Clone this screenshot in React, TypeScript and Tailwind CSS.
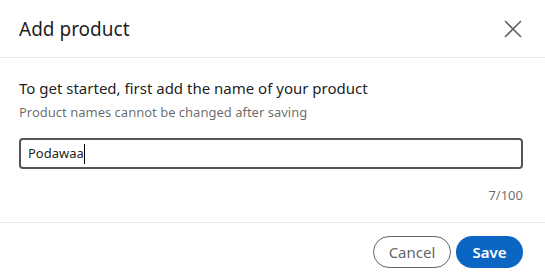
import React from "react";

export default function App() {
  return (
    <div className="w-[545px] h-[279px] bg-white flex flex-col" style={{ fontFamily: '"Noto Sans", "Open Sans", sans-serif' }}>
      <div className="h-[58px] flex items-center justify-between pl-[19px] pr-[20px] border-b border-[#e8e8e8] shrink-0">
        <h2 className="text-[19px] text-[#000000e6] leading-[28px]">Add product</h2>
        <button className="w-[24px] h-[24px] flex items-center justify-center text-[#666666]">
          <svg width="18" height="18" viewBox="0 0 18 18" fill="none" stroke="currentColor" strokeWidth="1.6">
            <path d="M1 1 L17 17 M17 1 L1 17" />
          </svg>
        </button>
      </div>
      <div className="px-[19px] pt-[18px] flex flex-col">
        <p className="text-[15px] leading-[24px] text-[#000000e6]">To get started, first add the name of your product</p>
        <p className="text-[13px] leading-[20px] text-[#00000099] mt-[2px]">Product names cannot be changed after saving</p>
        <div className="mt-[16px] mr-[3px] h-[31px] border-2 border-[#555555] rounded-[4px] flex items-center px-[7px]">
          <span className="text-[13px] text-[#000000e6]">Podawaa</span>
          <span className="w-px h-[20px] bg-black" />
        </div>
        <div className="flex justify-end mr-[3px] mt-[16px]">
          <span className="text-[13px] leading-[20px] text-[#00000099]">7/100</span>
        </div>
      </div>
      <div className="mt-[17px] border-t border-[#e8e8e8] flex justify-end items-center gap-[5px] pr-[22px] pt-[13px]">
        <button className="h-[32px] w-[78px] rounded-full border border-[#666666] text-[#666666] text-[15px]">Cancel</button>
        <button className="h-[32px] w-[67px] rounded-full bg-[#0a66c2] text-white text-[15px] font-semibold">Save</button>
      </div>
    </div>
  );
}
